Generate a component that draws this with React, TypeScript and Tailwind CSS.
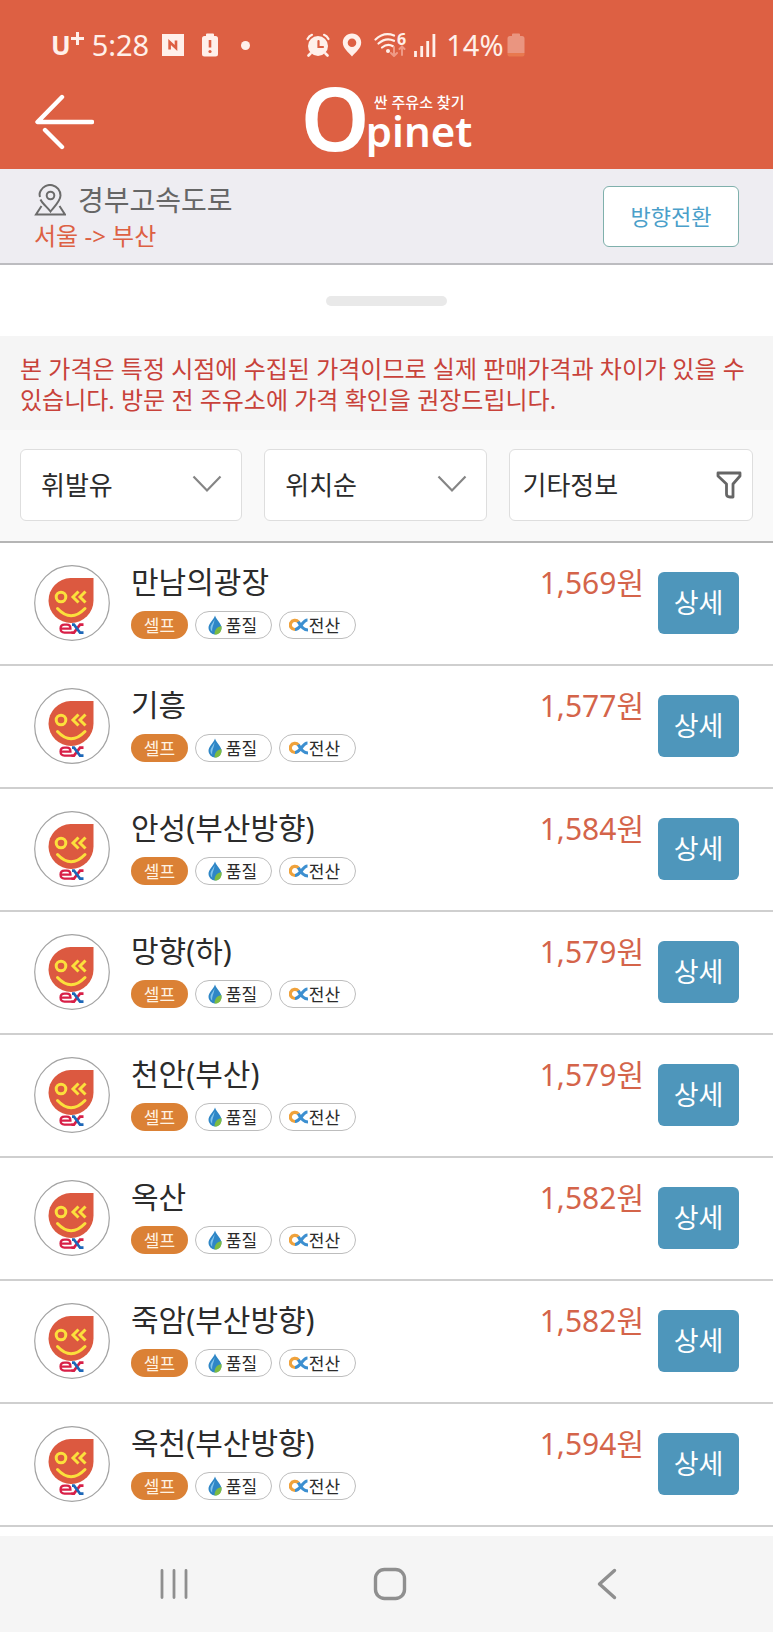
import React from "react";

const stations = [
  { id: 0, name: "만남의광장", price: "1,569" },
  { id: 1, name: "기흥", price: "1,577" },
  { id: 2, name: "안성(부산방향)", price: "1,584" },
  { id: 3, name: "망향(하)", price: "1,579" },
  { id: 4, name: "천안(부산)", price: "1,579" },
  { id: 5, name: "옥산", price: "1,582" },
  { id: 6, name: "죽암(부산방향)", price: "1,582" },
  { id: 7, name: "옥천(부산방향)", price: "1,594" },
];

const StatusBar = () => (
  <div className="flex items-center pl-[51px] pt-[26px] h-16 text-[#fff0ea]">
    <div className="flex items-start leading-9">
      <span className="text-[26px] font-bold">U</span>
      <svg className="w-[13px] h-[13px] mt-[5px]" viewBox="0 0 13 13" stroke="currentColor" strokeWidth="3">
        <path d="M6.5 0v13M0 6.5h13" />
      </svg>
    </div>
    <span className="ml-2 text-[29px] leading-9">5:28</span>
    <svg className="ml-3 w-6 h-6" viewBox="0 0 24 24">
      <rect x="1" y="1" width="22" height="22" fill="currentColor" />
      <path d="M8.600 16.500V9L15 15V7.500" fill="none" stroke="#dd6043" strokeWidth="2.600" />
    </svg>
    <svg className="ml-4 w-[18px] h-6" viewBox="0 0 18 24">
      <path d="M5 3V1.500Q5 .5 6 .5h6q1 0 1 1V3h1.500Q17 3 17 5.500V21q0 2.500-2.500 2.500h-11Q1 23.500 1 21V5.500Q1 3 3.500 3z" fill="currentColor" />
      <path d="M9 7v7.500" stroke="#dd6043" strokeWidth="2.600" />
      <circle cx="9" cy="18.500" r="1.600" fill="#dd6043" />
    </svg>
    <span className="ml-[22px] w-[9px] h-[9px] rounded-full bg-[#fff0ea]" />

    <svg className="ml-14 w-6 h-6" viewBox="0 0 24 24" fill="none" stroke="currentColor" strokeLinecap="round">
      <circle cx="12" cy="13" r="10" fill="currentColor" stroke="none" />
      <path d="M1.500 6Q3 3 6 1.800M22.500 6Q21 3 18 1.800" strokeWidth="2.200" />
      <path d="M4.500 20.500L2.500 22.500M19.500 20.500L21.500 22.500" strokeWidth="2.600" />
      <path d="M12.500 8v6H17" stroke="#dd6043" strokeWidth="2.200" />
    </svg>
    <svg className="ml-3 w-5 h-6" viewBox="0 0 20 24">
      <path
        fill="currentColor"
        fillRule="evenodd"
        d="M10 .5C4.700 .5 .8 4.500 .8 9.600C.8 15.500 7 20 10 23.600C13 20 19.200 15.500 19.200 9.600C19.200 4.500 15.300 .5 10 .5zM10 5.400a4.300 4.300 0 1 1 0 8.600a4.300 4.300 0 1 1 0-8.600z"
      />
    </svg>
    <div className="relative ml-3 w-8 h-6">
      <svg className="w-8 h-6" viewBox="0 0 32 24" fill="none" stroke="currentColor" strokeWidth="2.200" strokeLinecap="round">
        <path d="M1.500 6.500Q10 -1.500 20 2.500" />
        <path d="M4.500 10.500Q12 4 20 7.800" />
        <path d="M8 14.500Q13.500 9.800 19 13.200" />
        <circle cx="14" cy="18" r="2" fill="currentColor" stroke="none" />
        <path d="M20 14v8.500M17 20l3 3 3-3M28 22v-8M25.500 16l2.500-2.500 2.500 2.500" stroke="#ef9a86" strokeWidth="2" />
      </svg>
      <span className="absolute right-0 -top-1 text-base leading-5 font-bold">6</span>
    </div>
    <svg className="ml-2 w-[22px] h-6" viewBox="0 0 22 24" stroke="currentColor" strokeWidth="2.800">
      <path d="M1.500 18v6M7.700 13v11M13.700 8v16M19.900 1v23" />
    </svg>
    <span className="ml-[10px] text-[29px] leading-9">14%</span>
    <svg className="ml-1 w-[18px] h-6" viewBox="0 0 18 24">
      <path d="M5 3V1.500Q5 .5 6 .5h6q1 0 1 1V3h2Q17.500 3 17.500 5.500V20H.5V5.500Q.5 3 3 3z" fill="#ea9580" />
      <path d="M.5 20h17v1.500q0 2-2 2h-13q-2 0-2-2z" fill="#e8794f" />
    </svg>
  </div>
);

const Logo = () => (
  <div className="flex items-start text-white">
    <span className="text-[88px] leading-[62px] font-semibold">O</span>
    <span className="flex flex-col -ml-1">
      <span className="pl-2 pt-2 text-[15px] leading-4 font-medium">싼 주유소 찾기</span>
      <span className="text-[42px] leading-[42px] font-semibold">pinet</span>
    </span>
  </div>
);

const ExLogo = () => (
  <svg className="shrink-0 w-[76px] h-[76px]" viewBox="0 0 76 76" role="img" aria-label="ex">
    <circle cx="38" cy="38" r="37.300" fill="#fff" stroke="#a3a3a3" strokeWidth="1.200" />
    <path d="M36.500 13H59.500V35.500A22.500 22.500 0 1 1 36.500 13z" fill="#dc5940" />
    <g fill="none" stroke="#fbe03c" strokeWidth="3">
      <circle cx="27" cy="32" r="4.800" />
      <path d="M44.500 26.500L39 32L44.500 37.500M51.500 26.500L46 32L51.500 37.500" />
      <path d="M23.500 43.500Q37 58 51 43.500" strokeLinecap="round" />
    </g>
    <path d="M23 57.500Q37 59.500 51 57.500V70H23z" fill="#fff" />
    <g fill="none" strokeWidth="2.200">
      <path d="M27 63.600H36.500Q36.500 59.600 33 59.600H30.500Q26.500 59.600 26.500 63.600Q26.500 67.600 30.500 67.600H38" stroke="#d81f47" />
      <path d="M37.500 67.600H40L46 59.600H49.500" stroke="#d81f47" strokeWidth="2.600" />
      <path d="M38 59.600H40L46 67.600H49.500" stroke="#1d67b8" strokeWidth="2.600" />
    </g>
  </svg>
);

const DropIcon = () => (
  <svg className="w-[14px] h-5" viewBox="0 0 14 20">
    <path d="M7 .5C5.500 5 .5 8.500 .5 13a6.500 6.500 0 0 0 13 0C13.500 8.500 8.500 5 7 .5z" fill="#2e86c6" />
    <path d="M6.500 4C5.500 8 2.500 9.500 2.500 13c0 2 1 3 1.800 3.600C3.500 12 6.500 9 6.500 4z" fill="#82c4ec" />
    <path d="M13.500 11C9 12 6.500 14.500 6.500 19.500C11 19.800 14 17 13.500 11z" fill="#7dbb42" />
  </svg>
);

const LoopIcon = () => (
  <svg className="w-5 h-[14px]" viewBox="0 0 20 14" fill="none" strokeWidth="3.200">
    <path d="M18.500 2C13.500 2 11.500 11.500 6 11.500" stroke="#3c8fd0" />
    <path d="M6 11.500A4.600 4.600 0 1 1 9.500 4" stroke="#f0a23b" />
    <path d="M9.300 3.600C11.500 8 14 12 19 12" stroke="#3c8fd0" />
  </svg>
);

const Chevron = () => (
  <svg
    className="absolute right-[20px] top-[26px] w-[30px] h-[18px] pointer-events-none"
    viewBox="0 0 30 18"
    fill="none"
    stroke="#858585"
    strokeWidth="2.200"
  >
    <path d="M1.500 1.500L15 15.500L28.500 1.500" />
  </svg>
);

const App = () => {
  return (
    <div className="min-h-screen flex flex-col bg-white text-[#2b2b2b] font-['Noto_Sans','Noto_Sans_CJK_KR',sans-serif]">
      <header className="bg-[#dd6043]">
        <StatusBar />
        <div className="grid grid-cols-[1fr_auto_1fr] items-start h-[105px] pt-[22px] px-[34px]">
          <button type="button" aria-label="뒤로" className="mt-2 justify-self-start">
            <svg className="w-[60px] h-[56px]" viewBox="0 0 60 56" fill="none" stroke="#fff" strokeWidth="4.400" strokeLinecap="round" strokeLinejoin="round">
              <path d="M28 3L3.500 28H58M11 36L28 53" />
            </svg>
          </button>
          <Logo />
        </div>
      </header>

      <section className="flex items-center justify-between h-24 px-[34px] bg-[#eeedf2] border-b-2 border-[#bcbcc0]">
        <div className="pt-1">
          <h1 className="flex items-center gap-3 text-[28px] leading-9 text-[#666]">
            <svg className="w-8 h-8" viewBox="0 0 32 32" fill="none" stroke="#6b6b6b" strokeWidth="2">
              <path d="M6 13Q5 10 6.500 7A10.500 10.500 0 0 1 26.500 11.500C26.500 17 20 23 16.500 27.500C13 23 8 19 6.500 15.500" />
              <circle cx="16.500" cy="11.500" r="3.800" />
              <path d="M7.500 22L2 30.500H31L25.500 22" />
            </svg>
            경부고속도로
          </h1>
          <p className="text-2xl leading-9 text-[#dd6043]">서울 -&gt; 부산</p>
        </div>
        <button type="button" className="w-[136px] h-[61px] rounded-md border border-[#7fb0ac] bg-white text-[22px] text-[#4b9fca]">
          방향전환
        </button>
      </section>

      <div className="flex justify-center pt-[31px] pb-[30px]">
        <span className="w-[121px] h-[10px] rounded-full bg-[#e9e9e9]" />
      </div>

      <p className="px-5 pt-[17px] pb-[15px] bg-[#f5f5f5] text-2xl leading-[31px] text-[#c8423a]">
        본 가격은 특정 시점에 수집된 가격이므로 실제 판매가격과 차이가 있을 수 있습니다. 방문 전 주유소에 가격 확인을 권장드립니다.
      </p>

      <div className="grid grid-cols-[1fr_1fr_1.1fr] gap-[22px] px-5 pt-[19px] pb-5 bg-[#f9f9f9] border-b-2 border-[#b5b5b5] text-[26px]">
        <div className="relative">
          <select aria-label="유종" className="w-full h-[72px] pl-5 appearance-none rounded-md border border-[#dedede] bg-white">
            <option>휘발유</option>
          </select>
          <Chevron />
        </div>
        <div className="relative">
          <select aria-label="정렬" className="w-full h-[72px] pl-5 appearance-none rounded-md border border-[#dedede] bg-white">
            <option>위치순</option>
          </select>
          <Chevron />
        </div>
        <button type="button" className="flex items-center justify-between h-[72px] pl-[13px] pr-[10px] rounded-md border border-[#dedede] bg-white">
          기타정보
          <svg className="w-[26px] h-7" viewBox="0 0 26 28" fill="none" stroke="#666" strokeWidth="2.800" strokeLinejoin="round">
            <path d="M2 2H24V5L17 13V26H14Q10.500 26 10.500 23V13L2 5z" />
          </svg>
        </button>
      </div>

      <ul className="flex-1">
        {stations.map((item) => (
          <li key={item.id} className="flex pt-[22px] pb-[23px] px-[34px] border-b-2 border-[#cfcfcf]">
            <ExLogo />
            <div className="ml-[21px] flex-1">
              <h2 className="text-[30px] leading-[34px]">{item.name}</h2>
              <div className="mt-3 flex gap-[7px] text-[17px] leading-none">
                <span className="flex items-center justify-center w-[57px] h-7 rounded-full bg-[#db8135] text-[#fff3e3]">셀프</span>
                <span className="flex items-center justify-center gap-1 w-[77px] h-7 pr-[2px] rounded-full border border-[#bdbdbd]">
                  <DropIcon />
                  품질
                </span>
                <span className="flex items-center justify-center w-[77px] h-7 pr-[6px] rounded-full border border-[#bdbdbd]">
                  <LoopIcon />
                  전산
                </span>
              </div>
            </div>
            <p className="text-[30px] leading-9 text-[#d4644a]">{item.price}원</p>
            <button type="button" className="ml-[14px] self-center w-[81px] h-[62px] rounded-md bg-[#4e96bb] text-[27px] text-white">
              상세
            </button>
          </li>
        ))}
      </ul>

      <nav className="grid grid-cols-3 items-center justify-items-center h-24 pl-[66px] pr-[58px] bg-[#f5f5f5]">
        <button type="button" aria-label="최근 앱">
          <svg className="w-8 h-8" viewBox="0 0 32 32" stroke="#8f8f8f" strokeWidth="2.800" strokeLinecap="round">
            <path d="M4 2.500v27M16 2.500v27M28 2.500v27" />
          </svg>
        </button>
        <button type="button" aria-label="홈">
          <svg className="w-[34px] h-[34px]" viewBox="0 0 34 34" fill="none" stroke="#8f8f8f" strokeWidth="3.400">
            <rect x="2.500" y="2.500" width="29" height="29" rx="9" />
          </svg>
        </button>
        <button type="button" aria-label="뒤로 가기">
          <svg className="w-8 h-8" viewBox="0 0 32 32" fill="none" stroke="#8f8f8f" strokeWidth="3.400" strokeLinecap="round" strokeLinejoin="round">
            <path d="M23.500 2.500L8.500 16L23.500 29.500" />
          </svg>
        </button>
      </nav>
    </div>
  );
};

export default App;
